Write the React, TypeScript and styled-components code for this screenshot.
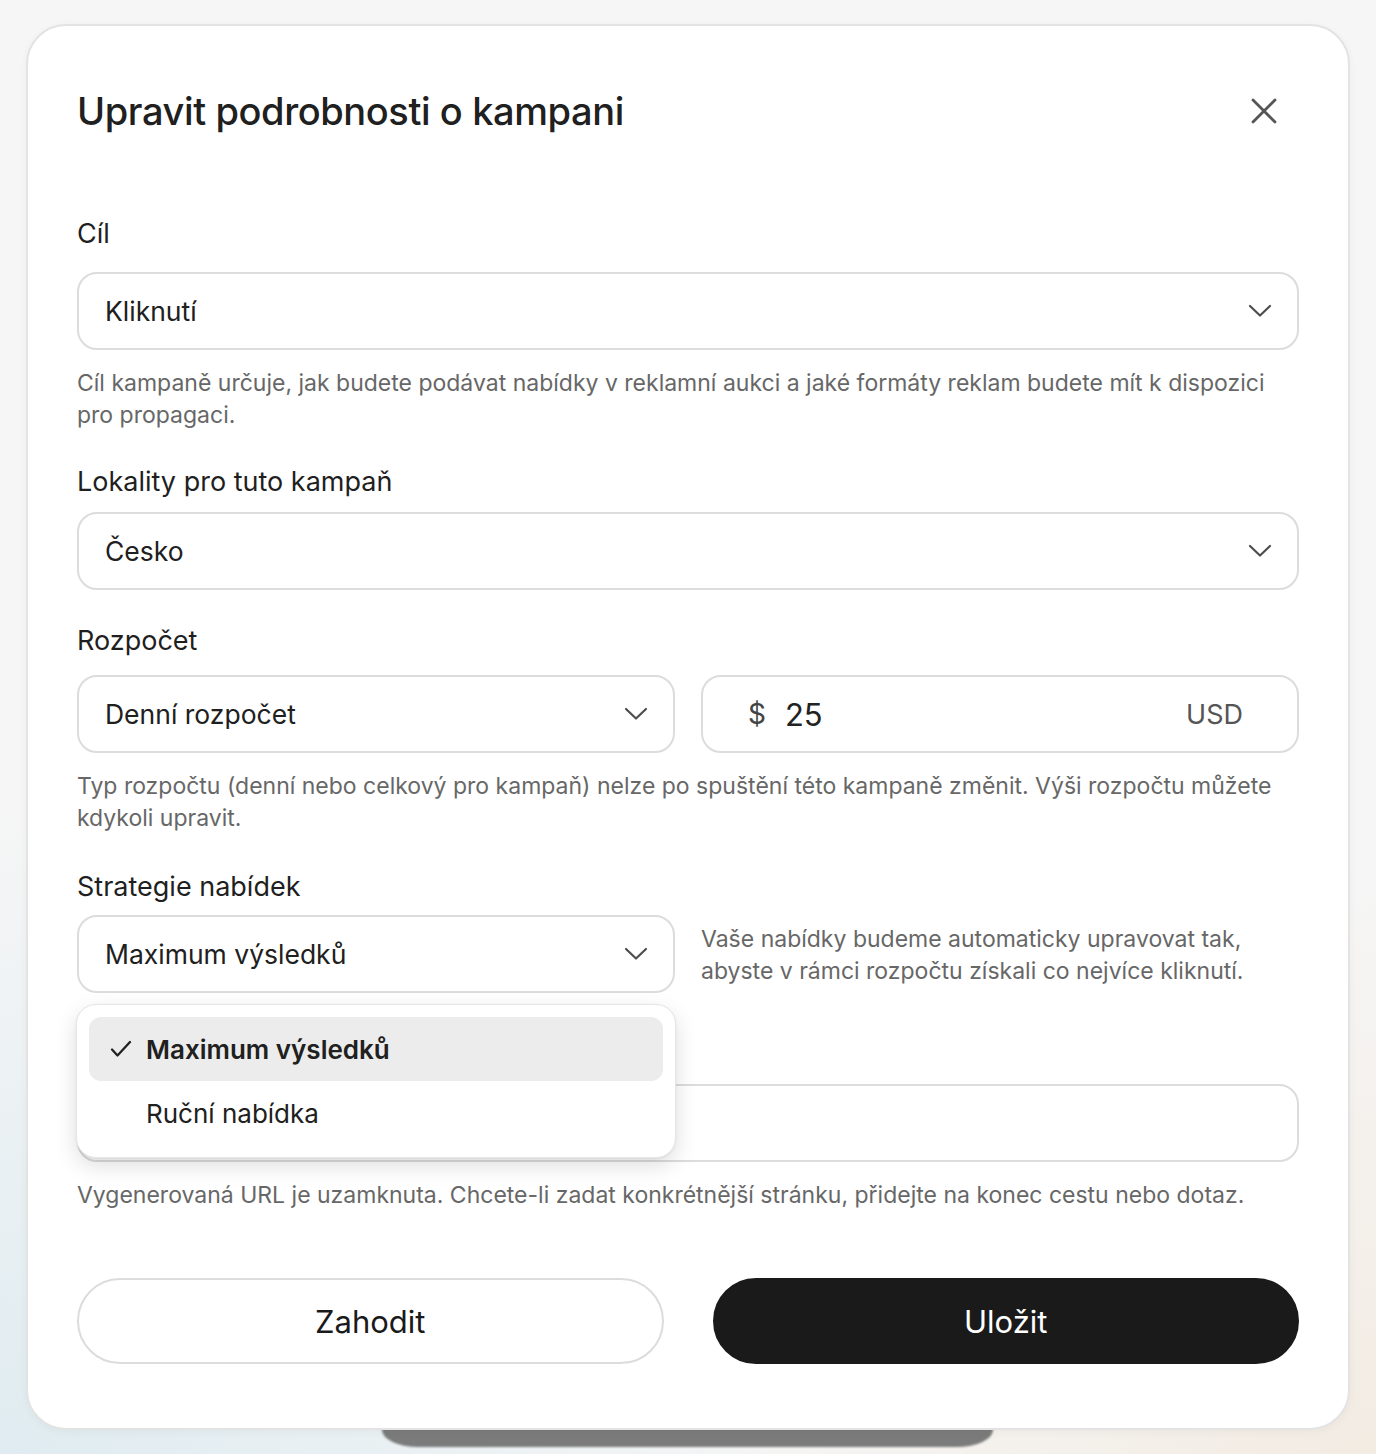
import React from "react";
import styled, { createGlobalStyle, css } from "styled-components";

const GlobalStyle = createGlobalStyle`
  * { box-sizing: border-box; }
  html, body { margin: 0; padding: 0; }
  body {
    font-family: Inter, "Noto Sans", "Liberation Sans", sans-serif;
    background: #f6f6f6;
    color: #1f1f1f;
  }
`;

const Page = styled.div`
  min-height: 1454px;
  padding: 24px 26px 24px;
  background:
    radial-gradient(ellipse 60% 45% at 0% 100%, rgba(222, 235, 240, 0.95) 0%, rgba(246, 246, 246, 0) 100%),
    radial-gradient(ellipse 50% 40% at 100% 100%, rgba(242, 234, 224, 0.9) 0%, rgba(246, 246, 246, 0) 100%),
    #f6f6f6;
`;

const ModalWrap = styled.div`
  position: relative;
`;

const UnderShadow = styled.div`
  position: absolute;
  left: 356px;
  width: 611px;
  bottom: -17px;
  height: 40px;
  background: #7b7b7b;
  border-radius: 0 0 36px 36px / 0 0 17px 17px;
  filter: blur(1px);
`;

const Modal = styled.section`
  position: relative;
  z-index: 1;
  background: #fff;
  border: 2px solid #e3e3e3;
  border-radius: 40px;
  padding: 60px 49px 64px;
  box-shadow: 0 2px 10px rgba(0, 0, 0, 0.04);
`;

const Header = styled.header`
  display: flex;
  align-items: center;
  justify-content: space-between;
  height: 50px;
`;

const Title = styled.h1`
  margin: 0;
  font-size: 38px;
  font-weight: 500;
  letter-spacing: -0.4px;
  color: #202020;
`;

const CloseButton = styled.button`
  display: flex;
  align-items: center;
  justify-content: center;
  width: 40px;
  height: 40px;
  margin-right: 15px;
  padding: 0;
  border: 0;
  background: none;
  cursor: pointer;
`;

const Form = styled.form`
  display: flex;
  flex-direction: column;
  margin-top: 82px;
`;

const Field = styled.div<{ $gap?: number }>`
  display: flex;
  flex-direction: column;
  margin-top: ${(p) => (p.$gap ?? 33)}px;
  &:first-child { margin-top: 0; }
`;

const Label = styled.label<{ $mb?: number }>`
  font-size: 27px;
  line-height: 32px;
  color: #1f1f1f;
  margin-bottom: ${(p) => (p.$mb ?? 18)}px;
`;

const boxBase = css`
  display: flex;
  align-items: center;
  height: 78px;
  border: 2px solid #dcdcdc;
  border-radius: 20px;
  background: #fff;
`;

const SelectBox = styled.div`
  ${boxBase};
  justify-content: space-between;
  padding: 0 25px 0 26px;
  font-size: 26.5px;
  color: #202020;
  cursor: pointer;
`;

const AmountBox = styled.div`
  ${boxBase};
  padding: 0 54px 0 45px;
  color: #222;
`;

const Currency = styled.span`
  font-size: 28px;
  color: #444;
  margin-right: 19px;
`;

const Amount = styled.span`
  flex: 1;
  font-size: 31px;
  color: #222;
`;

const Unit = styled.span`
  font-size: 27px;
  color: #555;
`;

const Helper = styled.p<{ $side?: boolean }>`
  margin: ${(p) => (p.$side ? "8px 0 0" : "17px 0 0")};
  font-size: 23px;
  line-height: 32px;
  color: #676767;
`;

const Row = styled.div`
  display: grid;
  grid-template-columns: 1fr 1fr;
  column-gap: 26px;
  align-items: start;
`;

const Anchor = styled.div`
  position: relative;
`;

const Menu = styled.ul`
  position: absolute;
  z-index: 5;
  top: calc(100% + 11px);
  left: -1px;
  width: 600px;
  margin: 0;
  padding: 12px;
  list-style: none;
  background: #fff;
  border: 1px solid #e6e6e6;
  border-radius: 20px;
  box-shadow: 0 8px 22px rgba(0, 0, 0, 0.13), 0 1px 3px rgba(0, 0, 0, 0.06);
`;

const MenuItem = styled.li<{ $active?: boolean }>`
  display: flex;
  align-items: center;
  height: 64px;
  padding-left: 21px;
  border-radius: 12px;
  font-size: 26px;
  color: #202020;
  background: ${(p) => (p.$active ? "#ececec" : "transparent")};
  font-weight: ${(p) => (p.$active ? 600 : 400)};
`;

const CheckSlot = styled.span`
  display: inline-flex;
  width: 36px;
  align-items: center;
`;

const Actions = styled.div`
  display: grid;
  grid-template-columns: 1fr 1fr;
  column-gap: 49px;
  margin-top: 67px;
`;

const Button = styled.button<{ $primary?: boolean }>`
  height: 86px;
  border-radius: 43px;
  font-family: inherit;
  font-size: 31px;
  font-weight: 400;
  cursor: pointer;
  border: 2px solid ${(p) => (p.$primary ? "#1a1a1a" : "#dcdcdc")};
  background: ${(p) => (p.$primary ? "#1a1a1a" : "#fff")};
  color: ${(p) => (p.$primary ? "#fff" : "#1a1a1a")};
`;

const Chevron = () => (
  <svg width="24" height="14" viewBox="0 0 24 14" fill="none">
    <polyline points="2,2 12,11.5 22,2" stroke="#4d4d4d" strokeWidth="2.2" strokeLinecap="round" strokeLinejoin="round" />
  </svg>
);

const CloseIcon = () => (
  <svg width="28" height="28" viewBox="0 0 28 28" fill="none">
    <path d="M3 3 L25 25 M25 3 L3 25" stroke="#555" strokeWidth="2.8" strokeLinecap="round" />
  </svg>
);

const Check = () => (
  <svg width="22" height="18" viewBox="0 0 22 18" fill="none">
    <polyline points="2,9.5 7.5,15.5 20,2" stroke="#222" strokeWidth="2.3" strokeLinecap="round" strokeLinejoin="round" />
  </svg>
);

export default function App() {
  return (
    <>
      <GlobalStyle />
      <Page>
        <ModalWrap>
          <UnderShadow />
          <Modal>
            <Header>
              <Title>Upravit podrobnosti o kampani</Title>
              <CloseButton aria-label="Zavřít">
                <CloseIcon />
              </CloseButton>
            </Header>

            <Form onSubmit={(e) => e.preventDefault()}>
              <Field>
                <Label $mb={22}>Cíl</Label>
                <SelectBox>
                  Kliknutí
                  <Chevron />
                </SelectBox>
                <Helper>
                  Cíl kampaně určuje, jak budete podávat nabídky v reklamní aukci a jaké formáty reklam budete mít k dispozici pro propagaci.
                </Helper>
              </Field>

              <Field $gap={35}>
                <Label $mb={14}>Lokality pro tuto kampaň</Label>
                <SelectBox>
                  Česko
                  <Chevron />
                </SelectBox>
              </Field>

              <Field $gap={35}>
                <Label>Rozpočet</Label>
                <Row>
                  <SelectBox>
                    Denní rozpočet
                    <Chevron />
                  </SelectBox>
                  <AmountBox>
                    <Currency>$</Currency>
                    <Amount>25</Amount>
                    <Unit>USD</Unit>
                  </AmountBox>
                </Row>
                <Helper>
                  Typ rozpočtu (denní nebo celkový pro kampaň) nelze po spuštění této kampaně změnit. Výši rozpočtu můžete kdykoli upravit.
                </Helper>
              </Field>

              <Field $gap={37}>
                <Label $mb={12}>Strategie nabídek</Label>
                <Row>
                  <Anchor>
                    <SelectBox>
                      Maximum výsledků
                      <Chevron />
                    </SelectBox>
                    <Menu role="listbox">
                      <MenuItem $active>
                        <CheckSlot>
                          <Check />
                        </CheckSlot>
                        Maximum výsledků
                      </MenuItem>
                      <MenuItem>
                        <CheckSlot />
                        Ruční nabídka
                      </MenuItem>
                    </Menu>
                  </Anchor>
                  <Helper $side>
                    Vaše nabídky budeme automaticky upravovat tak, abyste v rámci rozpočtu získali co nejvíce kliknutí.
                  </Helper>
                </Row>
              </Field>

              <Field $gap={41}>
                <Label>Cílová URL</Label>
                <SelectBox />
                <Helper>
                  Vygenerovaná URL je uzamknuta. Chcete-li zadat konkrétnější stránku, přidejte na konec cestu nebo dotaz.
                </Helper>
              </Field>
            </Form>

            <Actions>
              <Button type="button">Zahodit</Button>
              <Button type="button" $primary>
                Uložit
              </Button>
            </Actions>
          </Modal>
        </ModalWrap>
      </Page>
    </>
  );
}
